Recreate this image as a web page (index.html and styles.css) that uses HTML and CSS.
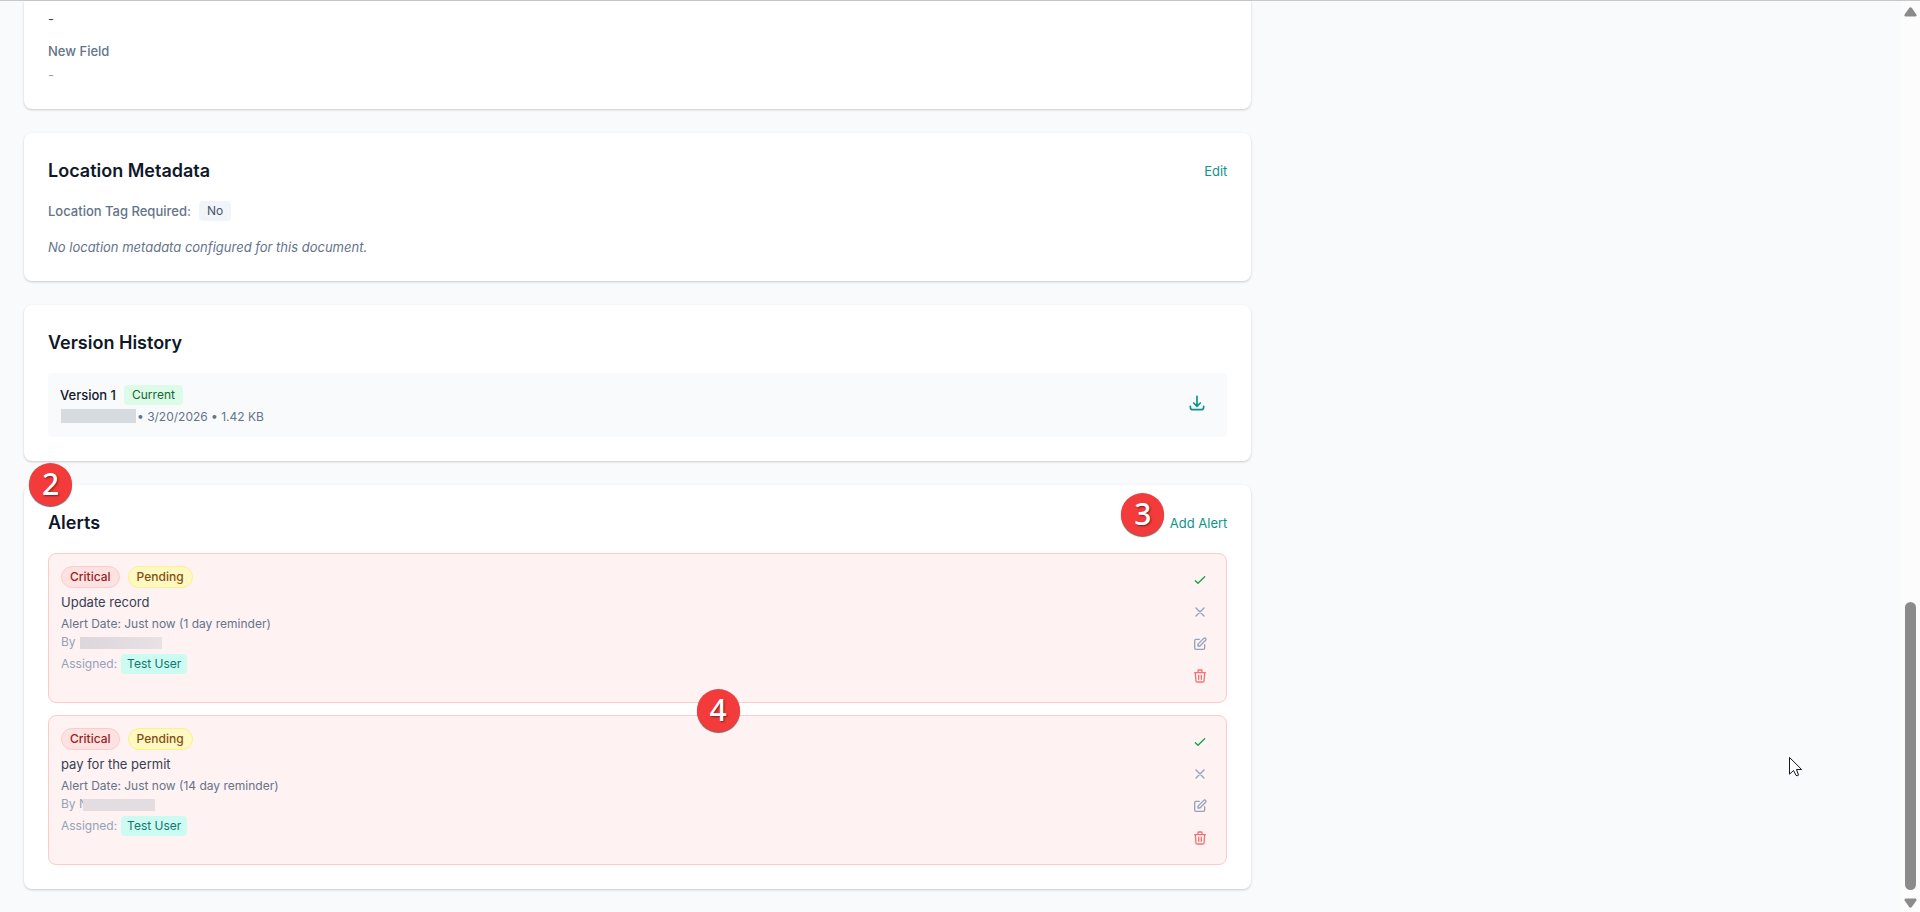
FILE: index.html
```html
<!DOCTYPE html>
<html lang="en">

<head>
  <meta charset="utf-8">
  <title>Document Details</title>
  <link rel="stylesheet" href="styles.css">
</head>

<body>
  <!-- Shared icons -->
  <svg class="sprite" aria-hidden="true">
    <symbol id="icon-download" viewBox="0 0 24 24">
      <path d="M4 16v1a3 3 0 003 3h10a3 3 0 003-3v-1m-4-4l-4 4m0 0l-4-4m4 4V4" />
    </symbol>
    <symbol id="icon-check" viewBox="0 0 24 24">
      <path d="M5 13l4 4L19 7" />
    </symbol>
    <symbol id="icon-close" viewBox="0 0 24 24">
      <path d="M6 18L18 6M6 6l12 12" />
    </symbol>
    <symbol id="icon-edit" viewBox="0 0 24 24">
      <path d="M11 5H6a2 2 0 00-2 2v11a2 2 0 002 2h11a2 2 0 002-2v-5m-1.414-9.414a2 2 0 112.828 2.828L11.828 15H9v-2.828l8.586-8.586z" />
    </symbol>
    <symbol id="icon-trash" viewBox="0 0 24 24">
      <path d="M19 7l-.867 12.142A2 2 0 0116.138 21H7.862a2 2 0 01-1.995-1.858L5 7m5 4v6m4-6v6m1-10V4a1 1 0 00-1-1h-4a1 1 0 00-1 1v3M4 7h16" />
    </symbol>
  </svg>

  <div class="window">
    <main class="page">
      <div class="column">
        <section class="card card-fields">
          <dl class="fields">
            <dd>-</dd>
            <dt>New Field</dt>
            <dd class="empty">-</dd>
          </dl>
        </section>

        <section class="card">
          <div class="card-header">
            <h3>Location Metadata</h3>
            <button type="button" class="link-button">Edit</button>
          </div>
          <div class="tag-row">
            <span class="tag-label">Location Tag Required:</span>
            <span class="tag">No</span>
          </div>
          <p class="note">No location metadata configured for this document.</p>
        </section>

        <section class="card">
          <div class="card-header">
            <h3>Version History</h3>
          </div>
          <div class="version">
            <div>
              <div class="version-title">
                <span>Version 1</span>
                <span class="tag tag-current">Current</span>
              </div>
              <p class="version-meta"><span class="redacted redacted-grey"></span>• 3/20/2026 • 1.42 KB</p>
            </div>
            <button type="button" class="download" aria-label="Download"><svg><use href="#icon-download" /></svg></button>
          </div>
        </section>

        <section class="card">
          <span class="step step-2">2</span>
          <div class="card-header">
            <h3>Alerts</h3>
            <button type="button" class="link-button">Add Alert</button>
            <span class="step step-3">3</span>
          </div>

          <div class="alerts">
            <article class="alert">
              <div class="alert-body">
                <div class="pills">
                  <span class="pill critical">Critical</span>
                  <span class="pill pending">Pending</span>
                </div>
                <p class="alert-title">Update record</p>
                <p class="alert-date">Alert Date: Just now (1 day reminder)</p>
                <p class="alert-author">By <span class="redacted redacted-wide"></span></p>
                <p class="assigned">Assigned: <span class="user">Test User</span></p>
              </div>
              <div class="actions">
                <button type="button" class="done" aria-label="Complete"><svg><use href="#icon-check" /></svg></button>
                <button type="button" aria-label="Dismiss"><svg><use href="#icon-close" /></svg></button>
                <button type="button" aria-label="Edit alert"><svg><use href="#icon-edit" /></svg></button>
                <button type="button" class="delete" aria-label="Delete"><svg><use href="#icon-trash" /></svg></button>
              </div>
              <span class="step step-4">4</span>
            </article>

            <article class="alert">
              <div class="alert-body">
                <div class="pills">
                  <span class="pill critical">Critical</span>
                  <span class="pill pending">Pending</span>
                </div>
                <p class="alert-title">pay for the permit</p>
                <p class="alert-date">Alert Date: Just now (14 day reminder)</p>
                <p class="alert-author">By N<span class="redacted redacted-short"></span></p>
                <p class="assigned">Assigned: <span class="user">Test User</span></p>
              </div>
              <div class="actions">
                <button type="button" class="done" aria-label="Complete"><svg><use href="#icon-check" /></svg></button>
                <button type="button" aria-label="Dismiss"><svg><use href="#icon-close" /></svg></button>
                <button type="button" aria-label="Edit alert"><svg><use href="#icon-edit" /></svg></button>
                <button type="button" class="delete" aria-label="Delete"><svg><use href="#icon-trash" /></svg></button>
              </div>
            </article>
          </div>
        </section>
      </div>
    </main>

    <div class="scrollbar" aria-hidden="true">
      <svg class="arrow" viewBox="0 0 13 10"><path d="M5 1.2Q6.500-.8 8 1.200L12.400 7.500Q13 9.500 11 9.500H2Q0 9.500.6 7.500Z" /></svg>
      <div class="thumb"></div>
      <svg class="arrow" viewBox="0 0 13 10"><path d="M5 8.800Q6.500 10.800 8 8.800L12.400 2.500Q13 .5 11 .5H2Q0 .5.6 2.500Z" /></svg>
    </div>
  </div>

  <svg class="cursor" viewBox="0 0 13 20" aria-hidden="true">
    <path d="M.5.8V17.200L4.500 13.500L7 18.300Q8 19.300 9.500 18.200L7.500 12.500H12.200Z" />
  </svg>
</body>

</html>
```
FILE: styles.css
```css
* {
  box-sizing: border-box;
}

body {
  margin: 0;
  overflow: hidden;
  background: #f8fafc;
  color: #0f172a;
  font-family: Inter, "Liberation Sans", sans-serif;
  font-size: 13px;
  line-height: 20px;
}

h3,
p,
dl,
dd {
  margin: 0;
}

button {
  border: 0;
  padding: 0;
  background: none;
  font: inherit;
  cursor: pointer;
}

svg {
  display: block;
  fill: none;
  stroke: currentColor;
  stroke-width: 2;
  stroke-linecap: round;
  stroke-linejoin: round;
}

.sprite {
  position: absolute;
  width: 0;
  height: 0;
}

.window {
  display: flex;
  min-height: 100vh;
  border-top: 1px solid #c8c8c8;
}

/* Page */

.page {
  flex: 1;
  display: grid;
  grid-template-columns: repeat(3, 1fr);
  column-gap: 24px;
  align-items: start;
  padding: 0 24px 22px;
}

.column {
  grid-column: span 2;
  display: flex;
  flex-direction: column;
  gap: 24px;
}

.card {
  position: relative;
  padding: 24px;
  background: #fff;
  border-radius: 8px;
  box-shadow: 0 1px 3px rgba(0, 0, 0, 0.1), 0 1px 2px rgba(0, 0, 0, 0.1);
}

.card-fields {
  padding-top: 8px;
  border-radius: 0 0 8px 8px;
}

.card-header {
  position: relative;
  display: flex;
  justify-content: space-between;
  align-items: center;
  margin-bottom: 16px;
}

h3 {
  font-size: 18px;
  font-weight: 600;
  line-height: 28px;
}

.link-button {
  color: #0d9488;
}

.fields {
  color: #334155;
}

.fields dt {
  margin: 12px 0 4px;
  color: #64748b;
  font-weight: 500;
}

.fields .empty {
  color: #94a3b8;
}

/* Location metadata */

.tag-row,
.version-title {
  display: flex;
  align-items: center;
  gap: 8px;
}

.tag-label {
  color: #64748b;
  font-weight: 500;
}

.tag {
  padding: 2px 8px;
  border-radius: 4px;
  background: #f1f5f9;
  color: #475569;
  font-size: 12px;
  font-weight: 400;
  line-height: 16px;
}

.tag-current {
  background: #dcfce7;
  color: #166534;
}

.note {
  margin-top: 16px;
  color: #64748b;
  font-style: italic;
}

/* Version history */

.version {
  display: flex;
  justify-content: space-between;
  align-items: flex-start;
  padding: 12px;
  border-radius: 4px;
  background: #f8fafc;
}

.version-title {
  font-weight: 500;
}

.version-meta {
  margin-top: 4px;
  color: #64748b;
  font-size: 12px;
  line-height: 16px;
}

.download {
  padding: 8px;
  color: #0d9488;
}

.download svg {
  width: 20px;
  height: 20px;
}

.redacted {
  display: inline-block;
  height: 12px;
  vertical-align: middle;
}

.redacted-grey {
  width: 75px;
  height: 14px;
  margin: 0 1px;
  background: #d6dbe0;
  vertical-align: top;
}

.redacted-wide {
  width: 82px;
  margin-left: 1px;
  background: linear-gradient(to right, #dcd6dd, #e8e1e4);
}

/* Covers the name after its first stroke */
.redacted-short {
  position: relative;
  width: 72px;
  margin-left: -5px;
  background: #e3dce0;
}

/* Alerts */

.alerts {
  display: flex;
  flex-direction: column;
  gap: 12px;
}

.alert {
  position: relative;
  display: flex;
  justify-content: space-between;
  padding: 12px;
  border: 1px solid #fecaca;
  border-radius: 8px;
  background: #fef2f2;
}

.alert-body {
  font-size: 12px;
  line-height: 16px;
}

.pills {
  display: flex;
  gap: 8px;
}

.pill {
  padding: 2px 8px;
  border: 1px solid;
  border-radius: 11px;
  font-weight: 500;
}

.critical {
  border-color: #fecaca;
  background: #fee2e2;
  color: #991b1b;
}

.pending {
  border-color: #fef08a;
  background: #fef9c3;
  color: #854d0e;
}

.alert-title {
  margin-top: 4px;
  color: #334155;
  font-size: 13px;
  line-height: 20px;
}

.alert-date {
  margin-top: 4px;
  color: #64748b;
}

.alert-author {
  margin-top: 2px;
  color: #94a3b8;
}

.assigned {
  display: flex;
  align-items: center;
  gap: 4px;
  margin-top: 4px;
  color: #94a3b8;
}

.user {
  padding: 2px 6px;
  border-radius: 4px;
  background: #ccfbf1;
  color: #0f766e;
}

.actions {
  display: flex;
  flex-direction: column;
  gap: 4px;
  color: #94a3b8;
}

.actions button {
  padding: 6px;
  color: inherit;
}

.actions svg {
  width: 16px;
  height: 16px;
}

.actions .done {
  color: #16a34a;
}

.actions .delete {
  color: #f87171;
}

/* Numbered markers */

.step {
  position: absolute;
  z-index: 1;
  width: 43px;
  height: 43px;
  border-radius: 50%;
  background: #f43b3b;
  box-shadow: 0 1px 1px rgba(0, 0, 0, 0.6);
  color: #fff;
  font-family: "Noto Sans", "Open Sans", sans-serif;
  font-size: 30px;
  font-weight: 500;
  line-height: 42px;
  text-align: center;
  text-shadow: 1px 1px 2px rgba(0, 0, 0, 0.5);
}

.step-2 {
  top: -22px;
  left: 5px;
}

.step-3 {
  top: -16px;
  right: 63px;
}

.step-4 {
  bottom: -30px;
  left: 55%;
}

/* Scrollbar and pointer */

.scrollbar {
  display: flex;
  flex-direction: column;
  align-items: center;
  gap: 8px;
  width: 19px;
  padding: 6px 0 4px;
  background: #fcfcfc;
}

.thumb {
  width: 11px;
  height: 288px;
  margin-top: auto;
  border-radius: 6px;
  background: #8b8b8b;
}

.arrow {
  width: 13px;
  height: 10px;
  fill: #8b8b8b;
  stroke: none;
}

.cursor {
  position: absolute;
  top: 757px;
  left: 1789px;
  width: 13px;
  height: 20px;
  fill: #fff;
  stroke: #14142b;
  stroke-width: 1;
}
```
